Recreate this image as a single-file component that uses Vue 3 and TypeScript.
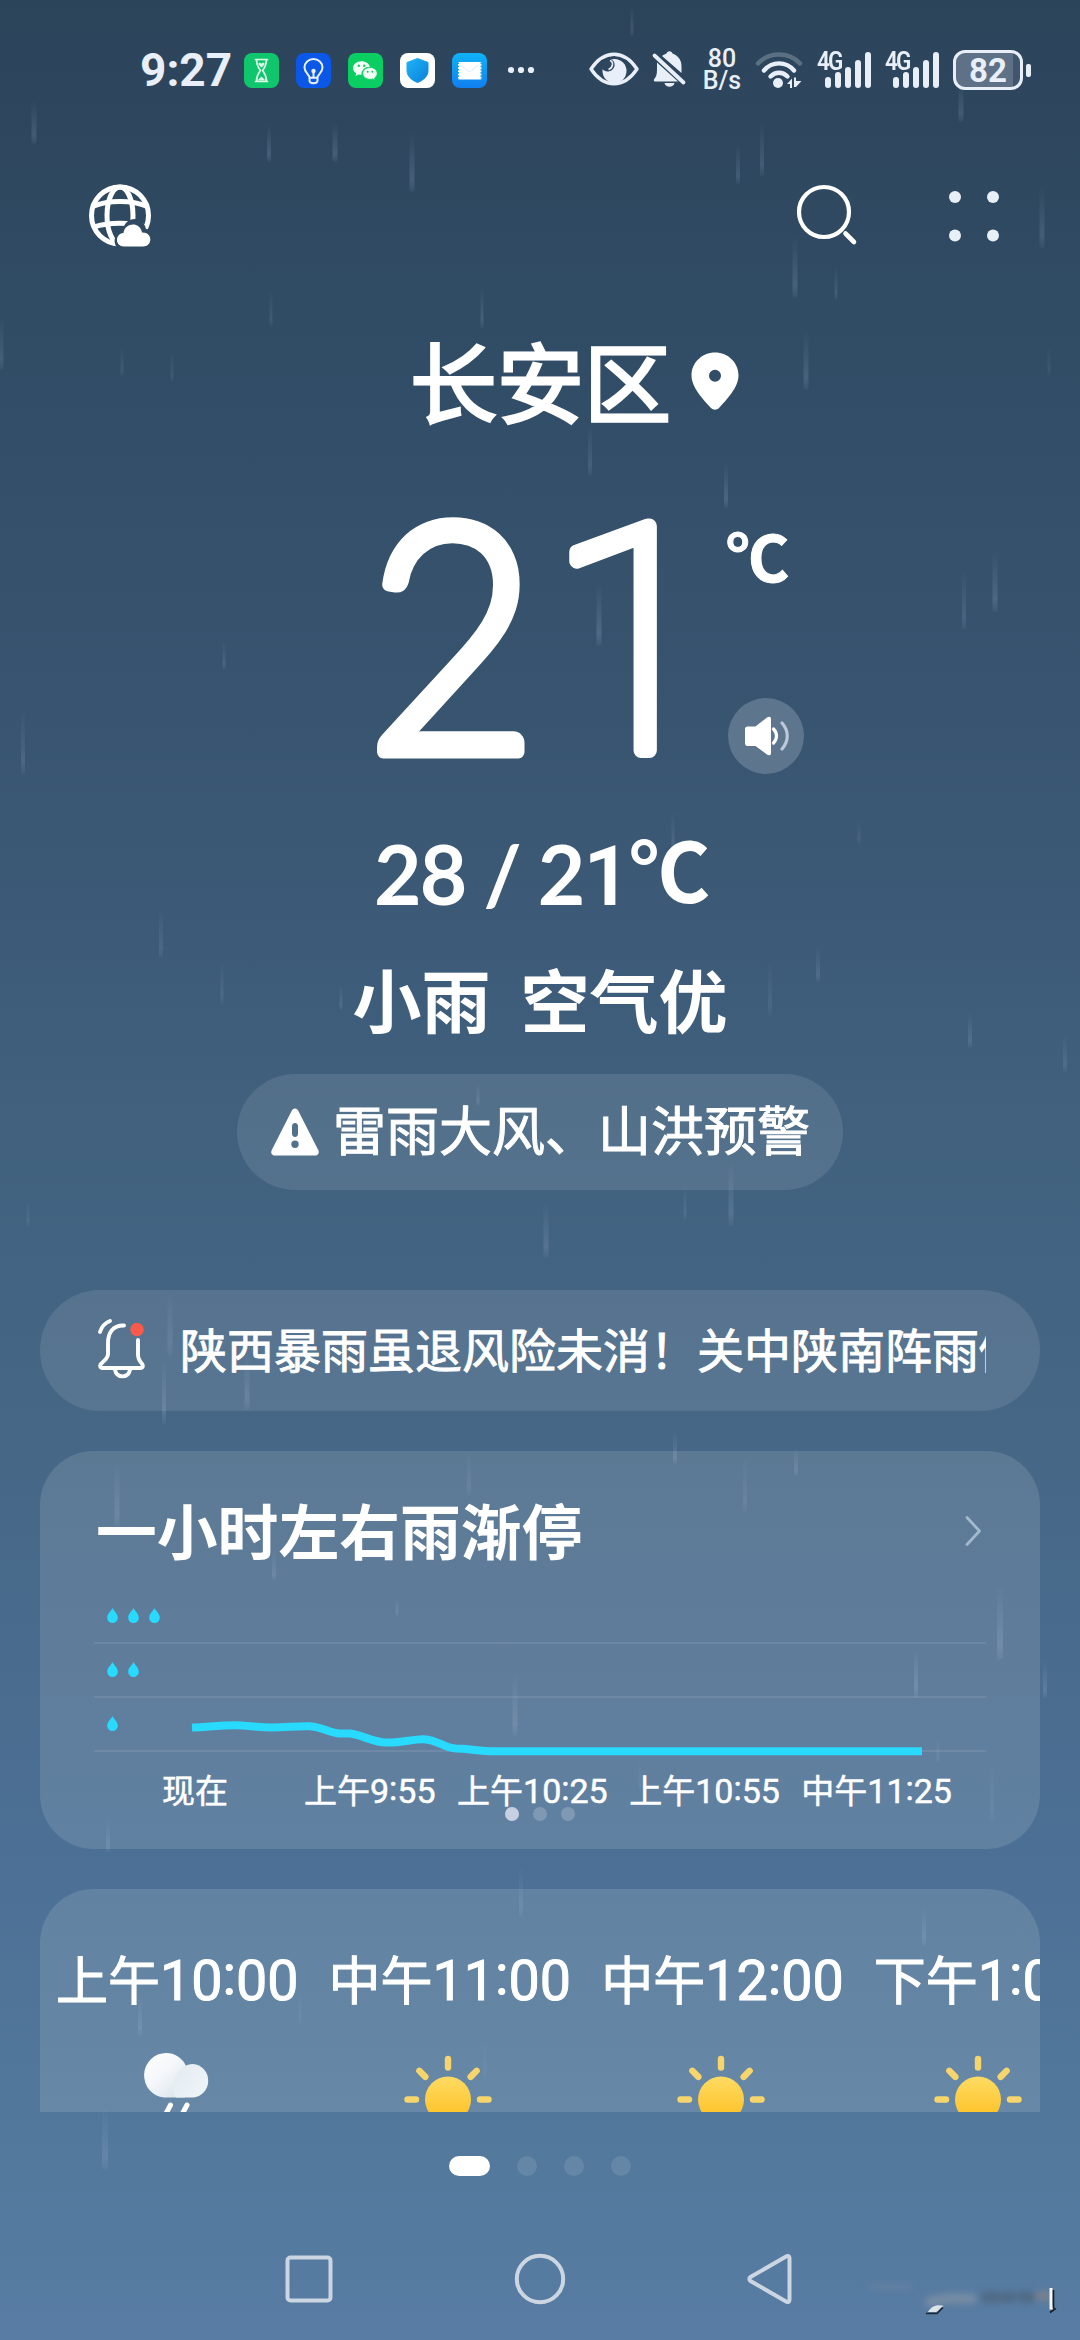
<script setup lang="ts">
interface Streak {
  x: number
  y: number
  len: number
  w: number
  o: number
}

const streaks: Streak[] = (
  [
    [34, 100, 44, 5, 0.13], [269, 124, 38, 4, 0.15], [335, 122, 40, 5, 0.15], [412, 132, 60, 5, 0.15],
    [632, 6, 30, 3, 0.12], [738, 144, 40, 4, 0.13], [762, 122, 54, 4, 0.13], [961, 80, 42, 5, 0.13],
    [1042, 186, 62, 5, 0.13], [795, 236, 62, 5, 0.15], [836, 266, 34, 3, 0.12], [271, 290, 36, 3, 0.1],
    [482, 286, 42, 3, 0.14], [122, 346, 30, 3, 0.09], [172, 352, 30, 3, 0.08], [1, 316, 54, 5, 0.12],
    [806, 330, 60, 5, 0.14], [590, 424, 52, 4, 0.12], [726, 462, 46, 4, 0.15], [1049, 346, 30, 3, 0.07],
    [599, 584, 62, 5, 0.16], [964, 570, 60, 4, 0.12], [995, 550, 62, 5, 0.15], [224, 640, 30, 3, 0.12],
    [23, 710, 64, 4, 0.12], [859, 820, 24, 3, 0.08], [673, 812, 38, 3, 0.12], [161, 908, 50, 4, 0.1],
    [222, 960, 44, 3, 0.1], [341, 984, 26, 3, 0.12], [818, 946, 36, 4, 0.12], [770, 960, 56, 4, 0.08],
    [970, 1012, 36, 4, 0.13], [1065, 1034, 38, 4, 0.11], [478, 1082, 24, 3, 0.12], [28, 1200, 26, 3, 0.09],
    [546, 1200, 58, 5, 0.13], [731, 1160, 66, 5, 0.14], [685, 1184, 36, 3, 0.1], [170, 1290, 66, 5, 0.1],
    [164, 1360, 64, 4, 0.14], [247, 1350, 60, 5, 0.12], [117, 1462, 66, 5, 0.12], [274, 1550, 30, 4, 0.12],
    [469, 1450, 46, 4, 0.08], [675, 1430, 34, 4, 0.14], [796, 1446, 30, 4, 0.12], [745, 1456, 56, 4, 0.08],
    [397, 1598, 18, 3, 0.12], [515, 1672, 64, 5, 0.13], [1000, 1586, 74, 6, 0.15], [916, 1648, 50, 4, 0.16],
    [1045, 1660, 38, 4, 0.14], [938, 1736, 26, 3, 0.08], [992, 1760, 60, 4, 0.06], [108, 1820, 32, 4, 0.12],
    [521, 1866, 52, 4, 0.1], [924, 1904, 42, 4, 0.12], [140, 1996, 40, 4, 0.12], [300, 1990, 34, 3, 0.06],
    [105, 2104, 66, 6, 0.12], [485, 2040, 40, 3, 0.05], [640, 1760, 30, 3, 0.05]
  ] as number[][]
).map(([x, y, len, w, o]) => ({ x, y, len, w, o }))

const levels: number[] = [3, 2, 1]

const minuteLabels: { day: string; h?: string; m?: string }[] = [
  { day: '现在' },
  { day: '上午', h: '9', m: '55' },
  { day: '上午', h: '10', m: '25' },
  { day: '上午', h: '10', m: '55' },
  { day: '中午', h: '11', m: '25' }
]

const hours: { day: string; h: string; m: string; icon: 'rain' | 'sun' }[] = [
  { day: '上午', h: '10', m: '00', icon: 'rain' },
  { day: '中午', h: '11', m: '00', icon: 'sun' },
  { day: '中午', h: '12', m: '00', icon: 'sun' },
  { day: '下午', h: '1', m: '00', icon: 'sun' }
]
const rays: number[] = [-90, -45, 0, 45, 90, 135, 180, 225]
const bars: number[] = [11, 16, 21, 28, 36]
</script>

<template>
  <div class="screen">
    <svg class="rain" viewBox="0 0 1080 2340" aria-hidden="true">
      <defs>
        <linearGradient id="drop" x1="0" y1="0" x2="0" y2="1">
          <stop offset="0" stop-color="#cfdcff" stop-opacity="0" />
          <stop offset="0.8" stop-color="#cfdcff" stop-opacity="1" />
          <stop offset="1" stop-color="#cfdcff" stop-opacity="0.3" />
        </linearGradient>
      </defs>
      <rect v-for="(s, i) in streaks" :key="i" :x="s.x - s.w / 2" :y="s.y" :width="s.w" :height="s.len" :rx="s.w / 2" :opacity="s.o" fill="url(#drop)" />
    </svg>

    <header class="status">
      <span class="clock">9:27</span>
      <div class="apps">
        <svg viewBox="0 0 35 35"><rect width="35" height="35" rx="8" fill="#10c66c" /><g fill="none" stroke="#dffbea" stroke-width="1.7" stroke-linejoin="round" stroke-linecap="round"><path d="M11.5 6.500h12M11.500 28.500h12M12.500 6.500c0 6 1.500 7.500 4 11-2.500 3.500-4 5-4 11M22.500 6.500c0 6-1.500 7.500-4 11 2.500 3.500 4 5 4 11" /></g><path d="M17.500 14.500l-3-3c-.5-2 2-2.500 3-.8 1-1.700 3.500-1.200 3 .8zM13.500 27.500l4-4 4 4z" fill="#dffbea" /></svg>
        <svg viewBox="0 0 35 35"><rect width="35" height="35" rx="8" fill="#0b57e8" /><path d="M13.500 24.500c0-3-5-4.500-5-10a9 8.500 0 0 1 18 0c0 5.500-5 7-5 10v3c0 2-1.500 2.700-4 2.700s-4-.7-4-2.700zM13.500 24.800h8M17.500 24v-5" fill="none" stroke="#eaf2ff" stroke-width="2" /><circle cx="17.500" cy="18" r="2.200" fill="#eaf2ff" /></svg>
        <svg viewBox="0 0 35 35"><rect width="35" height="35" rx="8" fill="#0bce62" /><path d="M13.500 8.200c-4.700 0-8.500 3-8.500 6.800 0 2.200 1.200 4 3.200 5.300l-.7 2.600 3-1.500c1 .3 2 .4 3 .4-.3-5 4-8.300 8.500-8-.8-3.300-4.300-5.600-8.500-5.600z" fill="#f2fff7" /><path d="M22 14.500c-4 0-7.200 2.600-7.200 5.900s3.200 5.900 7.200 5.900c.9 0 1.800-.1 2.500-.4l2.600 1.400-.6-2.300c1.700-1.100 2.700-2.700 2.700-4.600 0-3.300-3.200-5.900-7.200-5.900z" fill="#f2fff7" stroke="#0bce62" stroke-width=".8" /><g fill="#0bce62"><circle cx="10.800" cy="12.800" r="1.200" /><circle cx="16.200" cy="12.800" r="1.200" /><circle cx="19.700" cy="18.800" r="1" /><circle cx="24.400" cy="18.800" r="1" /></g></svg>
        <svg viewBox="0 0 35 35"><defs><linearGradient id="sh" x1="0" y1="0" x2="1" y2="1"><stop offset="0" stop-color="#1fb4f8" /><stop offset="1" stop-color="#0a7fd8" /></linearGradient></defs><rect width="35" height="35" rx="8" fill="#fff" /><path d="M17.500 5.500l10.500 4v8c0 6-4.500 9.500-10.500 12C11.500 27 7 23.500 7 17.500v-8z" fill="url(#sh)" stroke="url(#sh)" stroke-width="1" stroke-linejoin="round" /></svg>
        <svg viewBox="0 0 35 35"><defs><linearGradient id="tk" x1="0" y1="0" x2="0" y2="1"><stop offset="0" stop-color="#0fb3f6" /><stop offset="1" stop-color="#117ff0" /></linearGradient></defs><rect width="35" height="35" rx="8" fill="url(#tk)" /><rect x="6" y="9" width="23.500" height="17.500" fill="#fff" /><path d="M6 9.500v17M29.500 9.500v17" stroke="#12a0f4" stroke-width="2" stroke-dasharray="1.600 1.600" /><path d="M8.500 12l9 7 9-7" fill="none" stroke="#e3f4fd" stroke-width="1.200" /></svg>
      </div>
      <svg class="more" viewBox="0 0 28 8"><circle cx="4" cy="4" r="3.100" /><circle cx="14" cy="4" r="3.100" /><circle cx="24" cy="4" r="3.100" /></svg>

      <svg class="eye" viewBox="0 0 50 34"><path d="M2 17C8 8 15.500 2.200 25 2.200S42 8 48 17C42 26 34.500 31.800 25 31.800S8 26 2 17z" fill="none" stroke="#e9eff9" stroke-width="3.400" stroke-linejoin="round" /><circle cx="25.500" cy="19" r="12" fill="#e9eff9" /><path d="M12 15.500c0-5 4-9 8.500-8.500 5.500.5 7 7.500 2.500 11-3.500 2.500-8 2-11-2.500z" fill="#2e475f" /><path d="M21 8.500c4 1.500 3 7.500-1.500 9" fill="none" stroke="#e9eff9" stroke-width="1.600" /></svg>
      <svg class="mute" viewBox="0 0 34 38"><path d="M5 12.500L26 31.500H3c-1.500 0-1.500-2-.4-3C5 26 5 22 5 18zM10 6c2-1.500 3-2 4.500-2.500 1-3 5-3 6 0 6.500 2.500 9 7 9 13v6.500z" fill="#e9eff9" /><path d="M12.500 33h10c-1 5-9 5-10 0z" fill="#e9eff9" /><path d="M2.500 5.500L31.500 32.500" stroke="#e9eff9" stroke-width="3.800" stroke-linecap="round" /></svg>
      <div class="rate"><span>80</span><span>B/s</span></div>
      <svg class="wifi" viewBox="0 0 48 38"><g fill="none" stroke="#e9eff9" stroke-linecap="round" stroke-width="4.400"><path d="M3 12.500c11-12 31-12 42 0" opacity=".25" /><path d="M9 19.500c8-9.500 22-9.500 30 0" /><path d="M15.500 25.500c5-5 12-5 17 0" /></g><circle cx="23" cy="32" r="5" fill="#e9eff9" /><path d="M32 33l5-5.500v9.500h-2v-4zM39 36v-9.500h2v3.500h5.500L41 36z" fill="#e9eff9" /></svg>
      <div v-for="n in 2" :key="n" class="cell">
        <span class="gen">4G</span>
        <div class="bars"><i v-for="b in bars" :key="b" :style="{ height: b + 'px' }"></i></div>
      </div>
      <div class="battery"><div class="shell">82</div><i class="tip"></i></div>
    </header>

    <nav class="tools">
      <svg class="globe" viewBox="0 0 64 64"><g fill="none" stroke="#fff" stroke-width="5"><circle cx="32" cy="31.500" r="28.500" /><ellipse cx="32" cy="31.500" rx="13" ry="28.500" /><path d="M6 22c14-6 38-6 52 0M6 43c14-5 38-5 52 0" /></g><path d="M32 66c-8-4-7-18 3-19 1-15 20-16 23-2 9 0 12 12 8 21z" fill="#304a62" /><path d="M36 62.500c-9 0-9.500-12.500-.5-13.500 1.500-11 16.500-11.500 18.500-.5 11-.5 11 14 1 14z" fill="#fff" /></svg>
      <div class="right">
        <svg class="search" viewBox="0 0 64 64"><circle cx="29" cy="28" r="25" fill="none" stroke="#fff" stroke-width="4.200" /><path d="M50.500 49.500l8.500 8.500" stroke="#fff" stroke-width="4.600" stroke-linecap="round" /></svg>
        <svg class="grid" viewBox="0 0 52 52"><circle cx="7" cy="7" r="6" /><circle cx="45" cy="7" r="6" /><circle cx="7" cy="45.500" r="6" /><circle cx="45" cy="45.500" r="6" /></svg>
      </div>
    </nav>

    <h1 class="city">
      <span>长安区</span>
      <svg class="pin" viewBox="0 0 48 58"><path fill-rule="evenodd" d="M24 .5C11 .5.500 10.500.500 23.500c0 12 12 24.500 19.500 32.500 2.500 2.200 5.500 2.200 8 0 7.500-8 19.500-20.500 19.500-32.500C47.500 10.500 37 .5 24 .5zM24 17.800a6 6 0 1 1 0 12 6 6 0 0 1 0-12z" fill="#fff" /></svg>
    </h1>

    <section class="now">
      <svg class="temp" viewBox="0 0 370 342">
        <text class="d2" transform="translate(10 278) scale(0.93 1)">2</text>
        <text class="d1" transform="translate(192 276.500)">1</text>
      </svg>
      <div class="side">
        <span class="unit">℃</span>
        <div class="speak">
          <svg viewBox="0 0 46 42"><path d="M4.500 11.500h8L24 2.500c2-1.500 4-.8 4 1.500v34c0 2.300-2 3-4 1.500l-11.500-8.500h-8c-1.500 0-2.500-1-2.500-2.500V14c0-1.500 1-2.500 2.500-2.500z" fill="#fff" /><path d="M30.500 14c4 4 4 10 0 14" fill="none" stroke="#fff" stroke-width="3.200" stroke-linecap="round" /><path d="M39 8c7 8 7 18 0 26" fill="none" stroke="#bcc9da" stroke-width="3.200" stroke-linecap="round" /></svg>
        </div>
      </div>
    </section>

    <div class="range"><span class="nums">28 / 2<span class="one">1</span></span><span class="deg">℃</span></div>
    <div class="cond"><span>小雨</span><span>空气优</span></div>
    <div class="alert">
      <svg viewBox="0 0 48 48"><path fill-rule="evenodd" d="M24 .5c1.800 0 2.600 1 3.400 2.500l19.800 39c1.500 3-.2 5.500-3 5.500H3.800c-2.800 0-4.500-2.500-3-5.500l19.800-39C21.400 1.500 22.200.5 24 .5zM24 15c-2 0-3 1.400-3 3.200v7.600c0 2 1 3.200 3 3.200s3-1.200 3-3.200v-7.600c0-1.800-1-3.200-3-3.200zm0 17.500a3.700 3.700 0 1 0 0 7.400 3.700 3.700 0 0 0 0-7.400z" fill="#fff" /></svg>
      <span>雷雨大风、山洪预警</span>
    </div>

    <div class="news">
      <svg viewBox="0 0 48 60"><g fill="none" stroke="#fff" stroke-width="3.900" stroke-linecap="round" stroke-linejoin="round"><path d="M26 6.500C15 6 10 14 10 24v11c0 5-5 7-7.500 10.500-1 2 0 3.500 2 3.500h38c2 0 3-1.500 2-3.500-2.500-3-4.500-5-4.500-9.500V21" /><path d="M17 51c2 8.500 13 8.500 15 0M2 13C3.500 8 7 4 12 2" /></g><circle cx="39" cy="10.500" r="6.700" fill="#fb5a4a" /></svg>
      <p>陕西暴雨虽退风险未消！关中陕南阵雨倾向</p>
    </div>

    <section class="card minutely">
      <div class="head">
        <h2>一小时左右雨渐停</h2>
        <svg viewBox="0 0 18 32"><path d="M3 2.500L15.500 16 3 29.500" fill="none" stroke="#a3b9cd" stroke-width="2.800" stroke-linecap="round" stroke-linejoin="round" /></svg>
      </div>
      <div class="chart">
        <div v-for="l in levels" :key="l" class="level">
          <svg v-for="n in l" :key="n" viewBox="0 0 11 15"><path d="M5.500 0C7 3 10.800 6 10.800 9.700a5.300 5.300 0 0 1-10.600 0C.2 6 4 3 5.500 0z" fill="#27dafe" /></svg>
        </div>
        <svg class="curve" viewBox="0 0 892 162"><path d="M98 137.500C112 137 126 135.200 141 135.200C154 135.300 162 137.500 178 137.500C194 137.500 200 136 216 136.300C230 137.500 236 143 246 143.500H256C268 145 280 152.500 292 152.500C308 153 318 149 330 149.200C344 150 350 158 362 158.500C374 158.500 382 161 396 161.300H828" fill="none" stroke="#27dafe" stroke-width="8" stroke-linejoin="round" /></svg>
      </div>
      <div class="ticks">
        <span v-for="(t, i) in minuteLabels" :key="i">{{ t.day }}<b v-if="t.h">{{ t.h }}<em>:</em>{{ t.m }}</b></span>
      </div>
      <div class="dots"><i class="on"></i><i></i><i></i></div>
    </section>

    <section class="card hourly">
      <div v-for="(h, i) in hours" :key="i" class="hour">
        <span>{{ h.day }}<b>{{ h.h }}<em>:</em>{{ h.m }}</b></span>
        <svg v-if="h.icon === 'rain'" viewBox="0 0 96 96">
          <defs>
            <linearGradient id="cl" x1="0" y1="0" x2="1" y2="1"><stop offset="0" stop-color="#fff" /><stop offset=".45" stop-color="#f4f7fa" /><stop offset="1" stop-color="#d3dfe8" /></linearGradient>
            <linearGradient id="cl2" x1="0" y1="0" x2="1" y2=".8"><stop offset="0" stop-color="#e4ebf0" /><stop offset="1" stop-color="#eef4f8" /></linearGradient>
          </defs>
          <path d="M38 5a21.500 21.500 0 0 1 20 13c4 6 10 30-2 31.500H36A22 22.300 0 0 1 38 5z" fill="url(#cl)" />
          <path d="M48 49.500c-8-12 1-33.500 17-33.500a16.500 16.800 0 0 1 0 33.500z" fill="url(#cl2)" />
          <path d="M42.500 57l-9 17M59 57l-9 17" stroke="#fff" stroke-width="5" stroke-linecap="round" />
        </svg>
        <svg v-else viewBox="0 0 96 96">
          <defs><linearGradient id="sun" x1="0" y1="0" x2="0" y2="1"><stop offset="0" stop-color="#fedb63" /><stop offset="1" stop-color="#fdbf20" /></linearGradient></defs>
          <circle cx="48" cy="51.500" r="23" fill="url(#sun)" />
          <path v-for="r in rays" :key="r" d="M80 51.500h8.500" :transform="`rotate(${r} 48 51.500)`" stroke="#f6d56c" stroke-width="6.400" stroke-linecap="round" />
        </svg>
      </div>
    </section>

    <div class="pager"><i class="on"></i><i></i><i></i><i></i></div>

    <footer class="keys">
      <svg viewBox="0 0 56 56"><rect x="6.500" y="6.500" width="43" height="43" rx="3" /></svg>
      <svg viewBox="0 0 56 56"><circle cx="28" cy="28" r="23.200" /></svg>
      <svg viewBox="0 0 56 56"><path d="M46.500 7v42c0 2-1.500 2.500-3 1.700L7.500 30c-1.500-1-1.500-3 0-4L43.500 5.300c1.500-.8 3-.3 3 1.700z" /></svg>
    </footer>

    <svg class="mark" viewBox="0 0 210 46" aria-hidden="true">
      <defs><filter id="soft" x="-20%" y="-100%" width="140%" height="300%"><feGaussianBlur stdDeviation="3.200" /></filter></defs>
      <g filter="url(#soft)" fill="none" stroke-linecap="round">
        <path d="M16 15h36" stroke="#7388a0" stroke-width="7" opacity=".4" />
        <path d="M74 30c10-3 24-5 42-3" stroke="#8c97a6" stroke-width="10" opacity=".6" />
        <path d="M130 25h10M150 25h4M166 25h8" stroke="#506a84" stroke-width="12" opacity=".9" />
        <path d="M184 24h8" stroke="#7b828e" stroke-width="10" opacity=".9" />
      </g>
      <path d="M72 40c3-5 8-8 16-6-4 1-5 5-8 6z" fill="#dde4ea" />
      <path d="M70 41.500h11l6-6" fill="none" stroke="#1c2733" stroke-width="1.500" />
      <path d="M195 16v20h3" fill="none" stroke="#f4f6f8" stroke-width="3" />
      <path d="M197.500 18v18l1.500 1-5 3.500" fill="none" stroke="#141b24" stroke-width="1.600" />
    </svg>
  </div>
</template>

<style>
html,
body {
  background: #2d465d;
}
</style>

<style scoped>
.screen {
  position: relative;
  width: 1080px;
  height: 2340px;
  overflow: hidden;
  display: flex;
  flex-direction: column;
  color: #fff;
  font-family: Roboto, "Noto Sans CJK SC", sans-serif;
  background: linear-gradient(180deg, #2c445a 0%, #304b64 13%, #35516c 24%, #3a5773 35%, #40607e 47%, #466786 62%, #4c7095 79%, #52789b 91%, #587ca3 100%);
}
.screen > * { flex: none; box-sizing: border-box; }
svg { display: block; overflow: visible; flex: none; }
.rain { position: absolute; left: 0; top: 0; width: 1080px; height: 2340px; }
.screen > :not(.rain):not(.mark) { position: relative; }

.status { height: 140px; padding-left: 140px; display: flex; align-items: center; color: #e9eff9; }
.clock { width: 104px; font-size: 46px; font-weight: 700; line-height: 60px; white-space: nowrap; }
.apps { display: flex; gap: 17px; }
.apps svg { width: 35px; height: 35px; }
.more { width: 28px; height: 8px; margin-left: 20px; fill: #e9eff9; }
.eye { width: 50px; height: 34px; margin: -2px 0 0 54px; }
.mute { width: 34px; height: 38px; margin: -2px 0 0 13px; }
.rate { width: 44px; margin-left: 14px; display: flex; flex-direction: column; font-size: 25px; font-weight: 500; line-height: 22px; text-align: center; }
.wifi { width: 48px; height: 38px; margin-left: 11px; }
.cell { width: 54px; height: 36px; margin-left: 14px; position: relative; display: flex; justify-content: flex-end; }
.cell + .cell { margin-left: 14px; }
.gen { position: absolute; left: 0; top: -1px; font-size: 25px; line-height: 22px; font-weight: 600; letter-spacing: -2px; transform: scaleX(0.9); transform-origin: 0 0; }
.bars { display: flex; align-items: flex-end; gap: 4px; }
.bars i { width: 6px; border-radius: 3px; background: #e9eff9; }
.battery { display: flex; align-items: center; margin-left: 14px; }
.shell { box-sizing: border-box; width: 70px; height: 40px; border: 3px solid #e9eff9; border-radius: 12px; line-height: 35px; text-align: center; font-size: 33px; font-weight: 700; background: linear-gradient(90deg, #5e7186 57px, #40566c 57px); }
.tip { width: 5px; height: 13px; margin-left: 3px; border-radius: 2px; background: #e9eff9; }

.tools { height: 152px; padding: 0 80px 0 88px; display: flex; align-items: center; justify-content: space-between; }
.globe { width: 64px; height: 64px; }
.right { display: flex; align-items: center; gap: 89px; }
.search { width: 64px; height: 64px; }
.grid { width: 52px; height: 52px; fill: #e9eff6; }

.city { margin: 0; height: 182px; padding-left: 410px; display: flex; align-items: center; font-size: 87px; font-weight: 400; line-height: 120px; font-family: "Noto Sans CJK SC", sans-serif; -webkit-text-stroke: 2.800px #fff; }
.city span { width: 281px; margin-top: -9px; }
.pin { width: 48px; height: 58px; margin-top: -4px; }

.now { height: 342px; display: flex; padding-left: 356px; }
.temp { width: 370px; height: 342px; fill: #fff; stroke: #fff; stroke-linejoin: round; }
.d2 { font: 300 319px Lato, sans-serif; stroke-width: 13px; }
.d1 { font: 100 315px Roboto, sans-serif; stroke-width: 15px; }
.side { display: flex; flex-direction: column; justify-content: space-between; padding: 44px 0 42px; }
.unit { font: 700 63px/72px "Noto Sans CJK SC", sans-serif; -webkit-text-stroke: 1px #fff; }
.speak { width: 76px; height: 76px; margin-left: 2px; border-radius: 50%; background: #5e768d; display: flex; align-items: center; justify-content: center; }
.speak svg { width: 46px; height: 42px; }

.range { height: 120px; padding-left: 4px; display: flex; justify-content: center; align-items: flex-start; font-size: 82px; font-weight: 700; white-space: nowrap; }
.nums { font-family: Lato, sans-serif; line-height: 114px; letter-spacing: -1.900px; }
.one { font: 600 83px/114px Roboto, sans-serif; }
.deg { font: 700 81px/101px "Noto Sans CJK SC", sans-serif; }
.cond { height: 138px; display: flex; justify-content: center; gap: 30px; font: 700 69px/124px "Noto Sans CJK SC", sans-serif; }
.alert { align-self: center; width: 606px; height: 116px; border-radius: 58px; padding-left: 34px; display: flex; align-items: center; background: rgba(255, 255, 255, 0.1); font: 400 53px/100px "Noto Sans CJK SC", sans-serif; -webkit-text-stroke: 1px #fff; }
.alert svg { width: 48px; height: 48px; margin-right: 14px; }
.alert span { margin-top: -9px; white-space: nowrap; }

.news { width: 1000px; height: 121px; margin: 100px 40px 0; padding: 0 54px 0 58px; border-radius: 60px; display: flex; align-items: center; background: rgba(255, 255, 255, 0.1); }
.news svg { width: 48px; height: 60px; margin-top: -4px; }
.news p { margin: -5px 0 0 34px; flex: 1; overflow: hidden; white-space: nowrap; font: 400 47px/100px "Noto Sans CJK SC", sans-serif; -webkit-text-stroke: 0.900px #fff; }

.card { width: 1000px; margin: 40px 40px 0; border-radius: 54px; background: rgba(255, 255, 255, 0.12); overflow: hidden; }
.minutely { height: 398px; padding: 0 54px; }
.head { height: 139px; padding: 23px 4px 0 2px; box-sizing: border-box; display: flex; align-items: flex-start; justify-content: space-between; }
.head h2 { margin: 0; font: 700 60.800px/110px "Noto Sans CJK SC", sans-serif; }
.head svg { width: 18px; height: 32px; margin-top: 41px; }
.chart { position: relative; height: 162px; }
.level { height: 54px; box-sizing: border-box; padding: 0 0 1px 13px; border-bottom: 2px solid rgba(255, 255, 255, 0.09); display: flex; align-items: center; gap: 10px; }
.level svg { width: 11px; height: 15px; }
.curve { position: absolute; left: 0; top: 0; width: 892px; height: 162px; }
.ticks { display: flex; gap: 21.500px; padding: 13px 0 0 68px; font-size: 33px; line-height: 54px; white-space: nowrap; -webkit-text-stroke: 0.500px #fff; }
.ticks span:nth-child(2) { margin-left: 54.500px; }
b { font-weight: 400; font-size: 1.03em; line-height: 1; }
em { font-style: normal; vertical-align: 0.1em; line-height: 1; }
.dots { display: flex; justify-content: center; gap: 14px; margin-top: -12px; }
.dots i { width: 14px; height: 14px; border-radius: 50%; background: rgba(220, 228, 245, 0.25); }
.dots .on { background: #c6d0e2; }

.hourly { height: 223px; padding: 55px 0 0 16px; border-radius: 54px 54px 0 0; display: flex; gap: 30px; background: rgba(255, 255, 255, 0.12); }
.hour { flex: none; display: flex; flex-direction: column; align-items: center; font-size: 52px; line-height: 78px; white-space: nowrap; }
.hour span { -webkit-text-stroke: 1px #fff; }
.hour b { font-size: 1.07em; }
.hour svg { width: 96px; height: 96px; margin: 26px 3px 0 0; }

.pager { height: 108px; display: flex; align-items: center; justify-content: center; gap: 27px; }
.pager i { width: 20px; height: 20px; border-radius: 50%; background: rgba(255, 255, 255, 0.11); }
.pager .on { width: 41px; border-radius: 10px; background: #fff; }
.keys { height: 118px; padding: 0 281px; display: flex; align-items: center; justify-content: space-between; }
.keys svg { width: 56px; height: 56px; fill: none; stroke: #cbd6e2; stroke-width: 4; }
.mark { position: absolute; left: 856px; top: 2272px; width: 210px; height: 46px; }
</style>
